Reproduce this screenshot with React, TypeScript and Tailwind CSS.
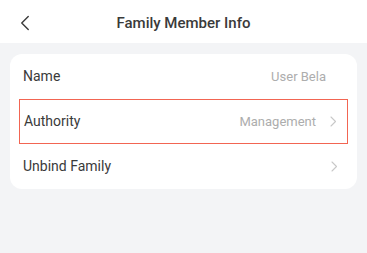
import { ChevronLeft } from 'lucide-react'

interface InfoRow {
  label: string
  value?: string
  arrow: boolean
  highlight?: boolean
}

const ROWS: InfoRow[] = [
  { label: 'Name', value: 'User Bela', arrow: false },
  { label: 'Authority', value: 'Management', arrow: true, highlight: true },
  { label: 'Unbind Family', arrow: true }
]

function SmallChevron() {
  return (
    <svg width="7" height="11" viewBox="0 0 7 11" fill="none" className="shrink-0">
      <path d="M1 1l4.5 4.5L1 10" stroke="#c8c8c8" strokeWidth="1.1" strokeLinecap="round" strokeLinejoin="round" />
    </svg>
  )
}

export default function App() {
  return (
    <div className="w-[367px] h-[253px] bg-[#f3f4f6] font-['Roboto',_'Liberation_Sans',_sans-serif] overflow-hidden">
      {/* Header */}
      <div className="h-[43px] bg-white flex items-center relative">
        <ChevronLeft className="w-[26px] h-[26px] text-[#3a3a3a] ml-[12px] mt-[2px]" strokeWidth={1.3} />
        <h1 className="absolute inset-x-0 top-[12px] text-center text-[15px] text-[#3a3a3a] font-medium">
          Family Member Info
        </h1>
      </div>

      {/* Info card */}
      <div className="px-[10px] pt-[11px]">
        <div className="bg-white rounded-[12px]">
          {ROWS.map((row) => (
            <div key={row.label} className="h-[45px] px-[9px] flex items-center">
              <div
                className={
                  row.highlight
                    ? "flex-1 h-full flex items-center px-[4px] border-[1.5px] border-[#f26552]"
                    : "flex-1 h-full flex items-center px-[4px]"
                }
              >
                <span className="flex-1 text-[14px] text-[#3a3a3a]">{row.label}</span>
                {row.value && <span className="text-[13px] text-[#adadad]">{row.value}</span>}
                {row.arrow && (
                  <span className="ml-[14px] mr-[6px]">
                    <SmallChevron />
                  </span>
                )}
                {!row.arrow && <span className="w-[18px]" />}
              </div>
            </div>
          ))}
        </div>
      </div>
    </div>
  )
}
